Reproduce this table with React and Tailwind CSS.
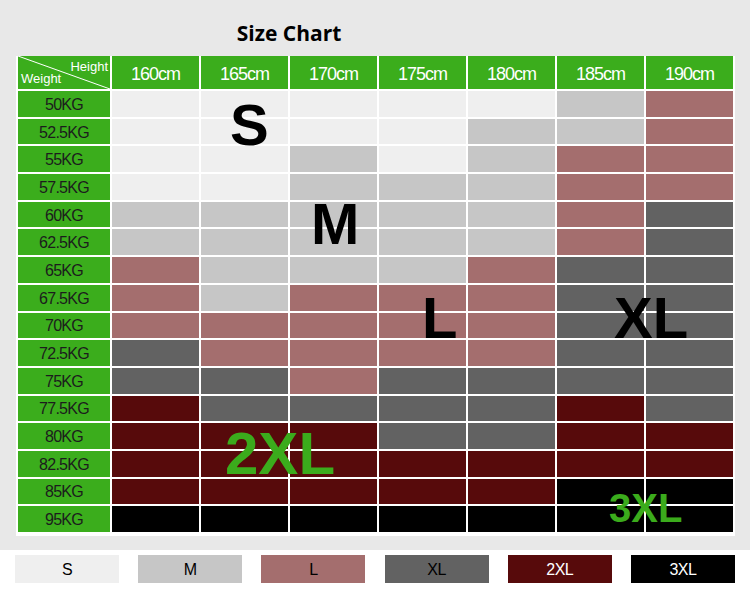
import React from "react";

const heights = ["160cm", "165cm", "170cm", "175cm", "180cm", "185cm", "190cm"];

// size per row, columns 160 -> 190
const rows = [
  ["50KG", ["S", "S", "S", "S", "S", "M", "L"]],
  ["52.5KG", ["S", "S", "S", "S", "M", "M", "L"]],
  ["55KG", ["S", "S", "M", "S", "M", "L", "L"]],
  ["57.5KG", ["S", "S", "M", "M", "M", "L", "L"]],
  ["60KG", ["M", "M", "M", "M", "M", "L", "XL"]],
  ["62.5KG", ["M", "M", "M", "M", "M", "L", "XL"]],
  ["65KG", ["L", "M", "M", "M", "L", "XL", "XL"]],
  ["67.5KG", ["L", "M", "L", "L", "L", "XL", "XL"]],
  ["70KG", ["L", "L", "L", "L", "L", "XL", "XL"]],
  ["72.5KG", ["XL", "L", "L", "L", "L", "XL", "XL"]],
  ["75KG", ["XL", "XL", "L", "XL", "XL", "XL", "XL"]],
  ["77.5KG", ["2XL", "XL", "XL", "XL", "XL", "2XL", "XL"]],
  ["80KG", ["2XL", "2XL", "2XL", "XL", "XL", "2XL", "2XL"]],
  ["82.5KG", ["2XL", "2XL", "2XL", "2XL", "2XL", "2XL", "2XL"]],
  ["85KG", ["2XL", "2XL", "2XL", "2XL", "2XL", "3XL", "3XL"]],
  ["95KG", ["3XL", "3XL", "3XL", "3XL", "3XL", "3XL", "3XL"]],
];

const cellBg = {
  S: "bg-[#efefef]",
  M: "bg-[#c6c6c6]",
  L: "bg-[#a46e6e]",
  XL: "bg-[#626262]",
  "2XL": "bg-[#570a0b]",
  "3XL": "bg-black",
};

const legend = [
  { size: "S", cls: "bg-[#efefef] text-black" },
  { size: "M", cls: "bg-[#c6c6c6] text-black" },
  { size: "L", cls: "bg-[#a46e6e] text-black" },
  { size: "XL", cls: "bg-[#626262] text-black" },
  { size: "2XL", cls: "bg-[#570a0b] text-white" },
  { size: "3XL", cls: "bg-black text-white" },
];

export default function App() {
  return (
    <div className="w-[750px] h-[599px] overflow-hidden bg-[#e8e8e8] font-['Liberation_Sans',Arial,sans-serif]">
      {/* title */}
      <div className="w-[578px] pt-[21px] mb-[11px] flex justify-center">
        <h1 className="font-['Open_Sans',sans-serif] font-bold text-[21px] leading-[24px] text-black">
          Size Chart
        </h1>
      </div>

      {/* chart */}
      <div className="relative ml-[16px] w-[719px] bg-white px-[2px] pb-[4px]">
        <div className="grid grid-cols-[92px_repeat(7,1fr)] grid-rows-[33px_repeat(16,25.7px)] gap-[2px]">
          {/* corner cell */}
          <div className="relative bg-[#3bad1c] text-white text-[13px] leading-none overflow-hidden">
            <svg className="absolute inset-0 w-full h-full" viewBox="0 0 92 33" preserveAspectRatio="none">
              <line x1="0" y1="0" x2="92" y2="33" stroke="white" strokeWidth="1" />
            </svg>
            <span className="absolute right-[2px] top-[4px]">Height</span>
            <span className="absolute left-[3px] top-[16px]">Weight</span>
          </div>
          {heights.map((h) => (
            <div
              key={h}
              className="bg-[#3bad1c] text-white text-[18px] tracking-[-1px] pt-[3px] flex items-center justify-center"
            >
              {h}
            </div>
          ))}

          {rows.map(([w, sizes]) => (
            <React.Fragment key={w}>
              <div className="bg-[#3bad1c] text-[#1c1c1c] text-[16px] tracking-[-0.75px] pt-[2px] flex items-center justify-center">
                {w}
              </div>
              {sizes.map((s, i) => (
                <div key={i} className={cellBg[s]} />
              ))}
            </React.Fragment>
          ))}
        </div>

        {/* size labels over the grid */}
        <span className="absolute left-[214px] top-[40px] text-[58px] font-bold leading-none text-black">S</span>
        <span className="absolute left-[295px] top-[139px] text-[58px] font-bold leading-none text-black">M</span>
        <span className="absolute left-[406px] top-[233px] text-[58px] font-bold leading-none text-black">L</span>
        <span className="absolute left-[598px] top-[233px] text-[58px] font-bold leading-none text-black">XL</span>
        <span className="absolute left-[209px] top-[368px] text-[60px] font-bold leading-none text-[#3bab1c]">2XL</span>
        <span className="absolute left-[593px] top-[432px] text-[40px] font-bold leading-none text-[#3bab1c]">3XL</span>
      </div>

      {/* legend */}
      <div className="mt-[14px] bg-white h-[49px] pt-[5px] px-[15px] flex justify-between items-start">
        {legend.map((l) => (
          <div
            key={l.size}
            className={`w-[104px] h-[28px] pt-[1px] flex items-center justify-center text-[16px] tracking-[-0.5px] ${l.cls}`}
          >
            {l.size}
          </div>
        ))}
      </div>
    </div>
  );
}
